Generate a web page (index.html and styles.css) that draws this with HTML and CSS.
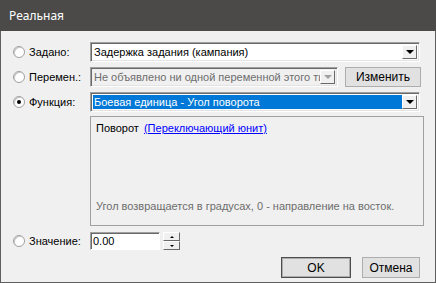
FILE: index.html
```html
<!doctype html>
<html lang="ru">
  <head>
    <meta charset="UTF-8" />
    <title>Реальная</title>
    <link rel="stylesheet" href="styles.css">
  </head>
  <body>
    <div class="window">
      <div class="titlebar">Реальная</div>

      <div class="content">
        <!-- Preset value -->
        <div class="row">
          <span class="radio"></span>
          <span class="label">Задано:</span>
          <div class="combo wide">
            <span class="combo-text">Задержка задания (кампания)</span>
            <span class="drop"><i class="arrow"></i></span>
          </div>
        </div>

        <!-- Variable -->
        <div class="row">
          <span class="radio"></span>
          <span class="label">Перемен.:</span>
          <div class="combo narrow disabled">
            <span class="combo-text">Не объявлено ни одной переменной этого типа</span>
            <span class="drop"><i class="arrow"></i></span>
          </div>
          <button class="btn edit">Изменить</button>
        </div>

        <!-- Function -->
        <div class="row">
          <span class="radio checked"></span>
          <span class="label">Функция:</span>
          <div class="combo wide">
            <span class="combo-text selected">Боевая единица - Угол поворота</span>
            <span class="drop"><i class="arrow"></i></span>
          </div>
        </div>

        <div class="panel">
          <p class="params">Поворот <a href="#">(Переключающий юнит)</a></p>
          <p class="hint">Угол возвращается в градусах, 0 - направление на восток.</p>
        </div>

        <!-- Constant value -->
        <div class="row value-row">
          <span class="radio"></span>
          <span class="label">Значение:</span>
          <div class="spin-box">
            <input class="number" type="text" value="0.00" />
            <div class="spinner">
              <span class="spin up"><i class="arrow up"></i></span>
              <span class="spin down"><i class="arrow"></i></span>
            </div>
          </div>
        </div>

        <div class="actions">
          <button class="btn default">OK</button>
          <button class="btn">Отмена</button>
        </div>
      </div>
    </div>
  </body>
</html>
```

FILE: styles.css
```css
* {
  box-sizing: border-box;
  margin: 0;
  padding: 0;
}
body {
  width: 436px;
  height: 283px;
  overflow: hidden;
  font-family: "Liberation Sans", Arial, sans-serif;
  font-size: 11px;
  color: #000;
  background: #f0f0f0;
}
.window {
  width: 436px;
  height: 283px;
  border: 1px solid #5f5f5f;
  border-top: none;
  background: #f0f0f0;
  display: flex;
  flex-direction: column;
}
.titlebar {
  height: 31px;
  margin: 0 -1px;
  padding-left: 9px;
  background: #4b4a48;
  color: #fff;
  font-family: "Noto Sans", "Open Sans", sans-serif;
  font-size: 12px;
  line-height: 31px;
}
.content {
  padding: 10px 0 0 12px;
  display: flex;
  flex-direction: column;
}
.row {
  display: flex;
  align-items: center;
  height: 21px;
  margin-bottom: 4px;
}
.radio {
  width: 12px;
  height: 12px;
  border-radius: 50%;
  border: 1px solid #a0a0a0;
  background: #fff;
  box-shadow: inset 1px 1px 0 #c8c8c8;
  position: relative;
  flex: none;
}
.radio.checked::after {
  content: "";
  position: absolute;
  left: 3px;
  top: 3px;
  width: 4px;
  height: 4px;
  border-radius: 50%;
  background: #000;
}
.label {
  width: 65px;
  padding-left: 4px;
  flex: none;
}
.combo {
  height: 20px;
  display: flex;
  align-items: stretch;
  background: #fff;
  border: 1px solid;
  border-color: #a0a0a0 #fff #fff #a0a0a0;
  box-shadow: inset 1px 1px 0 #696969, inset -1px -1px 0 #e3e3e3;
  padding: 2px;
}
.combo.wide {
  width: 330px;
}
.combo.narrow {
  width: 248px;
}
.combo.disabled {
  background: #f0f0f0;
  color: #6d6d6d;
}
.combo-text {
  flex: 1;
  padding-left: 1px;
  line-height: 14px;
  white-space: nowrap;
  overflow: hidden;
}
.combo-text.selected {
  background: #0078d7;
  color: #fff;
}
.drop {
  width: 15px;
  flex: none;
  display: flex;
  align-items: center;
  justify-content: center;
  background: #f0f0f0;
  border: 1px solid;
  border-color: #fff #696969 #696969 #fff;
}
.arrow {
  display: block;
  width: 0;
  height: 0;
  border-left: 4px solid transparent;
  border-right: 4px solid transparent;
  border-top: 4px solid #000;
}
.disabled .arrow {
  border-top-color: #a0a0a0;
}
.arrow.up {
  border-top: none;
  border-bottom: 4px solid #000;
}
.btn {
  font-family: "Liberation Sans", Arial, sans-serif;
  font-size: 12px;
  color: #000;
  background: #e1e1e1;
  border: 1px solid #adadad;
  height: 20px;
}
.btn.edit {
  width: 76px;
  margin-left: 7px;
}
.panel {
  width: 334px;
  height: 110px;
  margin-left: 77px;
  margin-bottom: 6px;
  border: 1px solid #a0a0a0;
  padding: 5px 5px 13px;
  display: flex;
  flex-direction: column;
  justify-content: space-between;
}
.params a {
  color: #0000ff;
  margin-left: 2px;
}
.hint {
  color: #6d6d6d;
  white-space: nowrap;
}
.value-row {
  height: 18px;
  margin-bottom: 7px;
}
.spin-box {
  display: flex;
  gap: 3px;
}
.number {
  width: 70px;
  height: 18px;
  font-family: "Liberation Sans", Arial, sans-serif;
  font-size: 11px;
  padding-left: 2px;
  border: 1px solid;
  border-color: #a0a0a0 #fff #fff #a0a0a0;
  box-shadow: inset 1px 1px 0 #696969;
  outline: none;
}
.spinner {
  width: 17px;
  display: flex;
  flex-direction: column;
}
.spin {
  height: 9px;
  display: flex;
  align-items: center;
  justify-content: center;
  background: #f0f0f0;
  border: 1px solid;
  border-color: #fff #696969 #696969 #fff;
}
.spin .arrow {
  border-left-width: 2px;
  border-right-width: 2px;
  border-top-width: 2px;
}
.spin .arrow.up {
  border-bottom-width: 2px;
}
.actions {
  display: flex;
  justify-content: flex-end;
  gap: 11px;
  padding-right: 15px;
}
.actions .btn {
  width: 70px;
  height: 21px;
}
.actions .btn:last-child {
  width: 58px;
}
.btn.default {
  border-color: #4d4d4d;
  box-shadow: inset 0 0 0 1px #adadad;
}
```
